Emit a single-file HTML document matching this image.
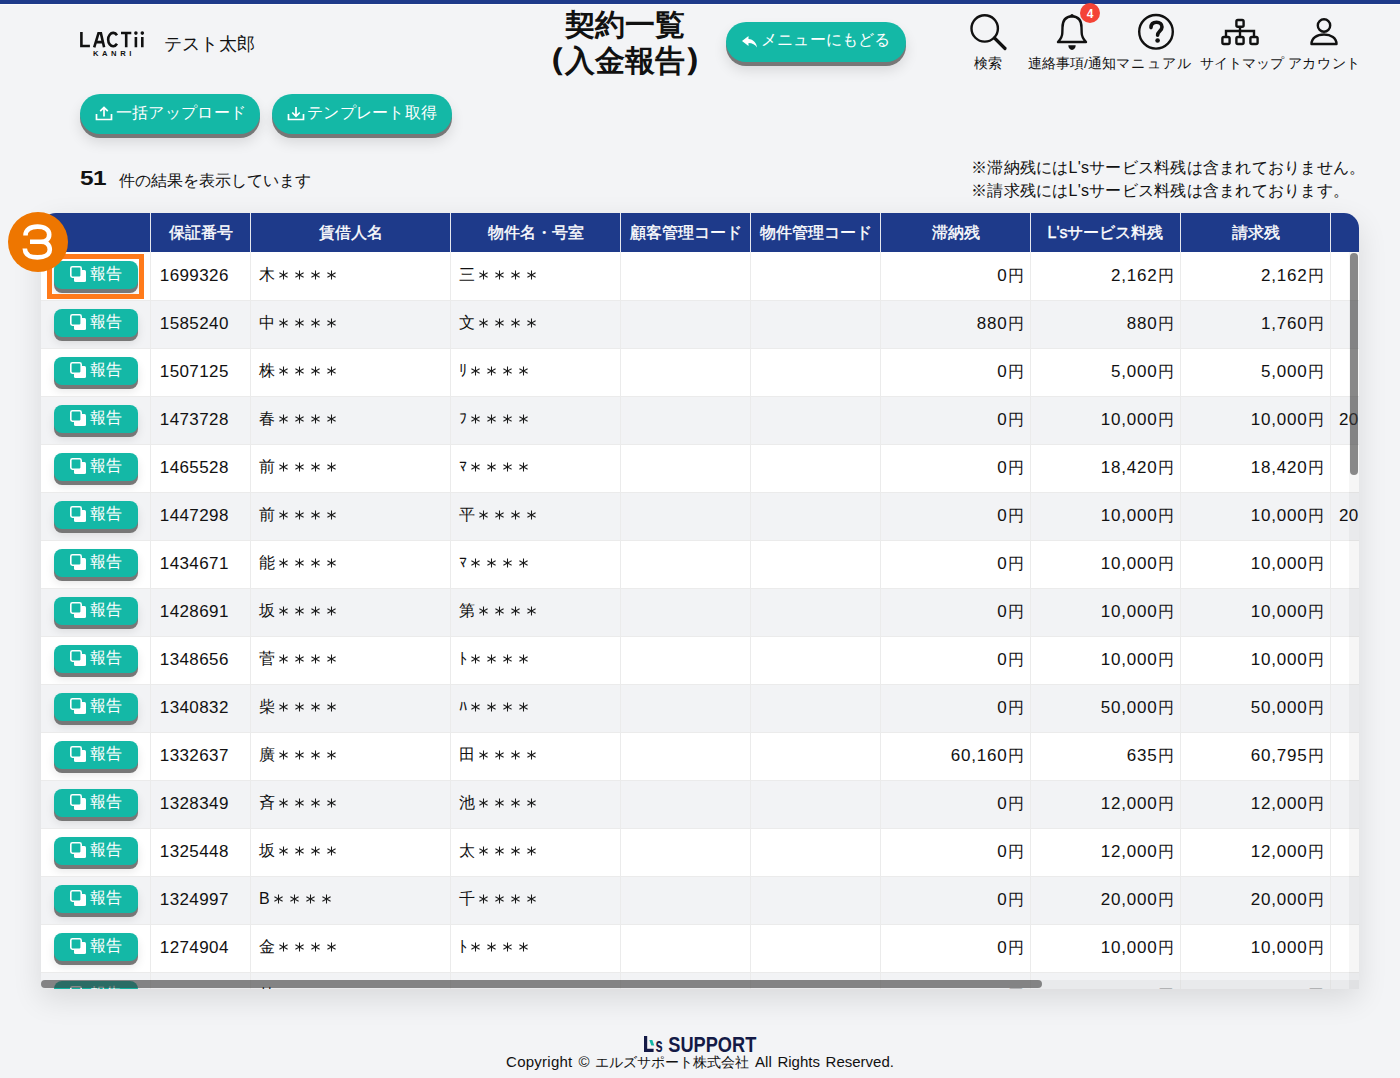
<!DOCTYPE html>
<html lang="ja"><head><meta charset="utf-8">
<style>
*{box-sizing:border-box;margin:0;padding:0}
html,body{width:1400px;height:1078px;overflow:hidden;background:#f3f4f6;font-family:"Liberation Sans",sans-serif;color:#111}
.abs{position:absolute}
#topbar{position:absolute;left:0;top:0;width:1400px;height:4px;background:#1e3a8a}
#topline{position:absolute;left:0;top:4px;width:1400px;height:1px;background:#fbfbfc}
.logo{position:absolute;left:78px;top:28px;width:70px;height:32px}
.uname{position:absolute;left:163.5px;top:32px;font-size:18px;line-height:24px;color:#111;letter-spacing:0.4px}
.title{position:absolute;left:500px;width:249px;top:7px;text-align:center;font-size:30px;line-height:36px;font-weight:bold;color:#111}
.par{-webkit-text-stroke:1.3px #111;position:relative;top:-2px}
.pill{position:absolute;height:40px;border-radius:20px;background:#14b8a6;color:#fff;box-shadow:0 4px 0 #777,0 8px 14px rgba(0,0,0,0.12);font-size:16px;line-height:40px;white-space:nowrap}
.nav{position:absolute;top:0;width:84px;height:80px;text-align:center}
.nav svg{position:absolute;left:0;top:0}
.nav span{position:absolute;left:-12px;width:108px;top:53.5px;font-size:13.6px;line-height:20px;text-align:center;color:#111;white-space:nowrap}
.badge{position:absolute;left:1080px;top:3px;width:20px;height:20px;border-radius:10px;background:#f44336;color:#fff;font-size:12px;font-weight:bold;line-height:22px;text-align:center}
.count{position:absolute;left:80px;top:166px;font-size:20px;font-weight:bold;line-height:24px;letter-spacing:-0.5px;transform:scaleX(1.22);transform-origin:0 0}
.countt{position:absolute;left:119px;top:171px;font-size:16px;line-height:20px}
.note{position:absolute;left:971px;top:156px;font-size:16px;line-height:23px;white-space:nowrap;letter-spacing:0.25px}
#tbl{position:absolute;left:41px;top:213px;width:1318px;height:776px;border-radius:15px 15px 0 0;overflow:hidden;background:#fff;box-shadow:0 10px 30px rgba(0,0,0,0.11)}
.hc{position:absolute;top:0;height:39px;background:#1e3a8a;color:#fff;font-weight:normal;-webkit-text-stroke:0.4px #fff;font-size:16px;line-height:39px;text-align:center;white-space:nowrap;overflow:hidden;padding-left:1px}
.hv{position:absolute;top:0;width:1px;height:39px;background:#e6e8ef}
.row{position:absolute;left:0;width:1318px;height:48px}
.hl{position:absolute;left:0;top:0;width:1318px;height:1px;background:#ebebeb}
.bv{position:absolute;top:39px;width:1px;height:737px;background:#ebebeb}
.c{position:absolute;top:13px;font-size:16px;line-height:20px;white-space:nowrap}
.num{font-size:17px;letter-spacing:0.4px;position:absolute;top:14px}
.amt{top:14px}
.amt b{font-weight:normal;font-size:17px;letter-spacing:0.8px}
.ast{vertical-align:-1px}
.btn{position:absolute;left:13px;top:9px;width:84px;height:28px;border-radius:8px;background:#14b8a6;box-shadow:0 4px 0 #777,0 6px 10px rgba(0,0,0,0.10);color:#fff;font-size:16px;line-height:28px}
.btn .cp{position:absolute;left:16px;top:5px}
.btn span{position:absolute;left:36px;top:-1px}
.vs{position:absolute;left:1308px;top:39px;width:10px;height:737px;background:rgba(0,0,0,0.035)}
.vthumb{position:absolute;left:1309px;top:40px;width:8px;height:222px;border-radius:4px;background:rgba(60,60,60,0.59)}
.hs{position:absolute;left:0;top:767px;width:1318px;height:9px;background:rgba(0,0,0,0.035)}
.hthumb{position:absolute;left:0;top:767px;width:1001px;height:8px;border-radius:4px;background:rgba(60,60,60,0.59)}
.mark{position:absolute;left:47px;top:254px;width:97px;height:45px;border:5px solid #ff7a1a}
.circ{position:absolute;left:8px;top:212px;width:60px;height:60px}
.flogo{position:absolute;left:640px;top:1030px;width:120px;height:26px}
.copy{position:absolute;left:0;width:1400px;top:1052px;text-align:center;font-size:15px;line-height:20px;color:#111;word-spacing:1.5px}
</style></head><body>
<svg width="0" height="0" style="position:absolute"><defs>
<g id="a1" stroke="#1a1a1a" stroke-width="1.05" fill="none"><path d="M0.5 -4.5V4.5M-3.6 -2.2L4.6 2.2M-3.6 2.2L4.6 -2.2"/></g>
<g id="a4"><use href="#a1" x="8" y="6"/><use href="#a1" x="24" y="6"/><use href="#a1" x="40" y="6"/><use href="#a1" x="56" y="6"/></g>
</defs></svg>
<div id="topbar"></div><div id="topline"></div>

<svg class="logo" viewBox="78 28 70 32">
 <g fill="none" stroke="#111" stroke-width="2.6">
  <path d="M81.4 31.9 V46 H89.9"/>
  <path d="M94.2 47.3 L98.5 33.2 H100.9 L104.1 47.3 M95.6 42.1 H102.6"/>
  <path d="M117 35.3 A5 6.65 0 1 0 117 43.8"/>
  <path d="M121 33.05 H131.3 M126.2 33 V47.3"/>
  <path d="M135.9 37 V47.3 M142.3 37 V47.3"/>
 </g>
 <circle cx="135.9" cy="33.1" r="1.8" fill="#111"/><circle cx="142.3" cy="33.1" r="1.8" fill="#111"/>
 <text x="93" y="56" font-family="Liberation Sans" font-size="7.6" font-weight="bold" fill="#111" textLength="38.3" lengthAdjust="spacing">KANRI</text>
</svg>
<div class="uname">テスト太郎</div>

<div class="title">契約一覧<br><span class="par">（</span>入金報告<span class="par">）</span></div>

<div class="pill" style="left:726px;top:22px;width:180px">
 <svg class="abs" style="left:16px;top:14px" width="16" height="12" viewBox="0 0 16 12"><path d="M6.5 0 L0 5 L6.5 10 L6.5 7 C10.5 7 13 8.5 15 11.5 C14.5 7 11.5 3.3 6.5 3 Z" fill="#fff"/></svg>
 <span class="abs" style="left:35px;top:-2px;letter-spacing:0.2px">メニューにもどる</span>
</div>

<div class="nav" style="left:946px">
 <svg width="84" height="54" viewBox="0 0 84 54"><circle cx="38.7" cy="28.4" r="13.2" fill="none" stroke="#111" stroke-width="2.4"/><line x1="48.5" y1="38" x2="59" y2="48.5" stroke="#111" stroke-width="3.2" stroke-linecap="round"/></svg>
 <span>検索</span>
</div>
<div class="nav" style="left:1030px">
 <svg width="84" height="54" viewBox="0 0 84 54"><path d="M42 16.3 C35.5 16.6 32.5 21 32.5 27.5 L32.3 33 C32.3 37 30.3 39.5 28 42 L56 42 C53.7 39.5 51.7 37 51.7 33 L51.5 27.5 C51.5 21 48.5 16.6 42 16.3 Z" fill="none" stroke="#111" stroke-width="2.4" stroke-linejoin="round"/><path d="M38.3 45.3 L45.7 45.3 C45.7 48 44 50 42 50 C40 50 38.3 48 38.3 45.3 Z" fill="#111"/><circle cx="42" cy="15.6" r="1.7" fill="#111"/></svg>
 <span>連絡事項/通知</span>
</div>
<div class="badge">4</div>
<div class="nav" style="left:1114px">
 <svg width="84" height="54" viewBox="0 0 84 54"><circle cx="42" cy="31.8" r="16.8" fill="none" stroke="#111" stroke-width="2.4"/><path d="M37 27.6 C37 24 39.3 22.2 42.6 22.2 C45.9 22.2 48 24.2 48 27 C48 30.8 43.6 31.2 43.6 35.3" fill="none" stroke="#111" stroke-width="3.6" stroke-linecap="round"/><circle cx="43.6" cy="40.5" r="2.3" fill="#111"/></svg>
 <span style="letter-spacing:1.4px;text-indent:-3.6px">マニュアル</span>
</div>
<div class="nav" style="left:1198px">
 <svg width="84" height="54" viewBox="0 0 84 54" fill="none" stroke="#111" stroke-width="2.4"><rect x="38.4" y="20" width="7.2" height="6.8" rx="1.5"/><line x1="42" y1="26.8" x2="42" y2="36"/><path d="M28 36.5 L28 31 L56 31 L56 36.5"/><rect x="24.4" y="37" width="7.2" height="7" rx="1.5"/><rect x="38.4" y="37" width="7.2" height="7" rx="1.5"/><rect x="52.4" y="37" width="7.2" height="7" rx="1.5"/></svg>
 <span style="text-indent:3px">サイトマップ</span>
</div>
<div class="nav" style="left:1282px">
 <svg width="84" height="54" viewBox="0 0 84 54" fill="none" stroke="#111" stroke-width="2.4"><circle cx="42" cy="25.5" r="6.2"/><path d="M29.5 44 C29.5 38 35 34.5 42 34.5 C49 34.5 54.5 38 54.5 44 Z" stroke-linejoin="round"/></svg>
 <span style="letter-spacing:0.7px;text-indent:0.7px">アカウント</span>
</div>

<div class="pill" style="left:80px;top:94px;width:180px">
 <svg class="abs" style="left:15px;top:12px" width="18" height="15" viewBox="0 0 18 15" fill="none" stroke="#fff" stroke-width="1.7"><path d="M1.5 8 L1.5 13.5 L16.5 13.5 L16.5 8"/><path d="M9 10.5 L9 1.8 M5.2 5.2 L9 1.4 L12.8 5.2"/></svg>
 <span class="abs" style="left:35.5px;top:-1px;letter-spacing:0.35px">一括アップロード</span>
</div>
<div class="pill" style="left:272px;top:94px;width:180px">
 <svg class="abs" style="left:15px;top:12px" width="18" height="15" viewBox="0 0 18 15" fill="none" stroke="#fff" stroke-width="1.7"><path d="M1.5 8 L1.5 13.5 L16.5 13.5 L16.5 8"/><path d="M9 1 L9 10 M5.2 6.5 L9 10.3 L12.8 6.5"/></svg>
 <span class="abs" style="left:35px;top:-1px;letter-spacing:0.25px">テンプレート取得</span>
</div>

<div class="count">51</div>
<div class="countt">件の結果を表示しています</div>
<div class="note">※滞納残にはL'sサービス料残は含まれておりません。<br>※請求残にはL'sサービス料残は含まれております。</div>

<div id="tbl">
<div class="hc" style="left:0px;width:109px"></div>
<div class="hc" style="left:109px;width:100px">保証番号</div>
<div class="hc" style="left:209px;width:200px">賃借人名</div>
<div class="hc" style="left:409px;width:170px">物件名・号室</div>
<div class="hc" style="left:579px;width:130px">顧客管理コード</div>
<div class="hc" style="left:709px;width:130px">物件管理コード</div>
<div class="hc" style="left:839px;width:150px">滞納残</div>
<div class="hc" style="left:989px;width:150px">L'sサービス料残</div>
<div class="hc" style="left:1139px;width:150px">請求残</div>
<div class="hc" style="left:1289px;width:150px"></div>
<div class="hv" style="left:109px"></div>
<div class="hv" style="left:209px"></div>
<div class="hv" style="left:409px"></div>
<div class="hv" style="left:579px"></div>
<div class="hv" style="left:709px"></div>
<div class="hv" style="left:839px"></div>
<div class="hv" style="left:989px"></div>
<div class="hv" style="left:1139px"></div>
<div class="hv" style="left:1289px"></div>
<div class="row" style="top:39px;background:#fff">
<div class="btn"><svg class="cp" width="17" height="17" viewBox="0 0 17 17"><rect x="4" y="4" width="12" height="12" rx="1.5" fill="#fff"/><rect x="0.8" y="0.8" width="10.4" height="10.4" rx="1.6" fill="#14b8a6" stroke="#fff" stroke-width="1.6"/></svg><span>報告</span></div>
<div class="c num" style="left:118.8px">1699326</div>
<div class="c nm" style="left:218px">木<svg class="ast" width="64" height="12"><use href="#a4"/></svg></div>
<div class="c nm" style="left:418px">三<svg class="ast" width="64" height="12"><use href="#a4"/></svg></div>
<div class="c amt" style="right:335.5px"><b>0</b>円</div>
<div class="c amt" style="right:185.5px"><b>2,162</b>円</div>
<div class="c amt" style="right:35.5px"><b>2,162</b>円</div>
</div>
<div class="row" style="top:87px;background:#f2f3f5">
<div class="hl"></div>
<div class="btn"><svg class="cp" width="17" height="17" viewBox="0 0 17 17"><rect x="4" y="4" width="12" height="12" rx="1.5" fill="#fff"/><rect x="0.8" y="0.8" width="10.4" height="10.4" rx="1.6" fill="#14b8a6" stroke="#fff" stroke-width="1.6"/></svg><span>報告</span></div>
<div class="c num" style="left:118.8px">1585240</div>
<div class="c nm" style="left:218px">中<svg class="ast" width="64" height="12"><use href="#a4"/></svg></div>
<div class="c nm" style="left:418px">文<svg class="ast" width="64" height="12"><use href="#a4"/></svg></div>
<div class="c amt" style="right:335.5px"><b>880</b>円</div>
<div class="c amt" style="right:185.5px"><b>880</b>円</div>
<div class="c amt" style="right:35.5px"><b>1,760</b>円</div>
</div>
<div class="row" style="top:135px;background:#fff">
<div class="hl"></div>
<div class="btn"><svg class="cp" width="17" height="17" viewBox="0 0 17 17"><rect x="4" y="4" width="12" height="12" rx="1.5" fill="#fff"/><rect x="0.8" y="0.8" width="10.4" height="10.4" rx="1.6" fill="#14b8a6" stroke="#fff" stroke-width="1.6"/></svg><span>報告</span></div>
<div class="c num" style="left:118.8px">1507125</div>
<div class="c nm" style="left:218px">株<svg class="ast" width="64" height="12"><use href="#a4"/></svg></div>
<div class="c nm" style="left:418px">ﾘ<svg class="ast" width="64" height="12"><use href="#a4"/></svg></div>
<div class="c amt" style="right:335.5px"><b>0</b>円</div>
<div class="c amt" style="right:185.5px"><b>5,000</b>円</div>
<div class="c amt" style="right:35.5px"><b>5,000</b>円</div>
</div>
<div class="row" style="top:183px;background:#f2f3f5">
<div class="hl"></div>
<div class="btn"><svg class="cp" width="17" height="17" viewBox="0 0 17 17"><rect x="4" y="4" width="12" height="12" rx="1.5" fill="#fff"/><rect x="0.8" y="0.8" width="10.4" height="10.4" rx="1.6" fill="#14b8a6" stroke="#fff" stroke-width="1.6"/></svg><span>報告</span></div>
<div class="c num" style="left:118.8px">1473728</div>
<div class="c nm" style="left:218px">春<svg class="ast" width="64" height="12"><use href="#a4"/></svg></div>
<div class="c nm" style="left:418px">ﾌ<svg class="ast" width="64" height="12"><use href="#a4"/></svg></div>
<div class="c amt" style="right:335.5px"><b>0</b>円</div>
<div class="c amt" style="right:185.5px"><b>10,000</b>円</div>
<div class="c amt" style="right:35.5px"><b>10,000</b>円</div>
<div class="c num" style="left:1298px">20</div>
</div>
<div class="row" style="top:231px;background:#fff">
<div class="hl"></div>
<div class="btn"><svg class="cp" width="17" height="17" viewBox="0 0 17 17"><rect x="4" y="4" width="12" height="12" rx="1.5" fill="#fff"/><rect x="0.8" y="0.8" width="10.4" height="10.4" rx="1.6" fill="#14b8a6" stroke="#fff" stroke-width="1.6"/></svg><span>報告</span></div>
<div class="c num" style="left:118.8px">1465528</div>
<div class="c nm" style="left:218px">前<svg class="ast" width="64" height="12"><use href="#a4"/></svg></div>
<div class="c nm" style="left:418px">ﾏ<svg class="ast" width="64" height="12"><use href="#a4"/></svg></div>
<div class="c amt" style="right:335.5px"><b>0</b>円</div>
<div class="c amt" style="right:185.5px"><b>18,420</b>円</div>
<div class="c amt" style="right:35.5px"><b>18,420</b>円</div>
</div>
<div class="row" style="top:279px;background:#f2f3f5">
<div class="hl"></div>
<div class="btn"><svg class="cp" width="17" height="17" viewBox="0 0 17 17"><rect x="4" y="4" width="12" height="12" rx="1.5" fill="#fff"/><rect x="0.8" y="0.8" width="10.4" height="10.4" rx="1.6" fill="#14b8a6" stroke="#fff" stroke-width="1.6"/></svg><span>報告</span></div>
<div class="c num" style="left:118.8px">1447298</div>
<div class="c nm" style="left:218px">前<svg class="ast" width="64" height="12"><use href="#a4"/></svg></div>
<div class="c nm" style="left:418px">平<svg class="ast" width="64" height="12"><use href="#a4"/></svg></div>
<div class="c amt" style="right:335.5px"><b>0</b>円</div>
<div class="c amt" style="right:185.5px"><b>10,000</b>円</div>
<div class="c amt" style="right:35.5px"><b>10,000</b>円</div>
<div class="c num" style="left:1298px">20</div>
</div>
<div class="row" style="top:327px;background:#fff">
<div class="hl"></div>
<div class="btn"><svg class="cp" width="17" height="17" viewBox="0 0 17 17"><rect x="4" y="4" width="12" height="12" rx="1.5" fill="#fff"/><rect x="0.8" y="0.8" width="10.4" height="10.4" rx="1.6" fill="#14b8a6" stroke="#fff" stroke-width="1.6"/></svg><span>報告</span></div>
<div class="c num" style="left:118.8px">1434671</div>
<div class="c nm" style="left:218px">能<svg class="ast" width="64" height="12"><use href="#a4"/></svg></div>
<div class="c nm" style="left:418px">ﾏ<svg class="ast" width="64" height="12"><use href="#a4"/></svg></div>
<div class="c amt" style="right:335.5px"><b>0</b>円</div>
<div class="c amt" style="right:185.5px"><b>10,000</b>円</div>
<div class="c amt" style="right:35.5px"><b>10,000</b>円</div>
</div>
<div class="row" style="top:375px;background:#f2f3f5">
<div class="hl"></div>
<div class="btn"><svg class="cp" width="17" height="17" viewBox="0 0 17 17"><rect x="4" y="4" width="12" height="12" rx="1.5" fill="#fff"/><rect x="0.8" y="0.8" width="10.4" height="10.4" rx="1.6" fill="#14b8a6" stroke="#fff" stroke-width="1.6"/></svg><span>報告</span></div>
<div class="c num" style="left:118.8px">1428691</div>
<div class="c nm" style="left:218px">坂<svg class="ast" width="64" height="12"><use href="#a4"/></svg></div>
<div class="c nm" style="left:418px">第<svg class="ast" width="64" height="12"><use href="#a4"/></svg></div>
<div class="c amt" style="right:335.5px"><b>0</b>円</div>
<div class="c amt" style="right:185.5px"><b>10,000</b>円</div>
<div class="c amt" style="right:35.5px"><b>10,000</b>円</div>
</div>
<div class="row" style="top:423px;background:#fff">
<div class="hl"></div>
<div class="btn"><svg class="cp" width="17" height="17" viewBox="0 0 17 17"><rect x="4" y="4" width="12" height="12" rx="1.5" fill="#fff"/><rect x="0.8" y="0.8" width="10.4" height="10.4" rx="1.6" fill="#14b8a6" stroke="#fff" stroke-width="1.6"/></svg><span>報告</span></div>
<div class="c num" style="left:118.8px">1348656</div>
<div class="c nm" style="left:218px">菅<svg class="ast" width="64" height="12"><use href="#a4"/></svg></div>
<div class="c nm" style="left:418px">ﾄ<svg class="ast" width="64" height="12"><use href="#a4"/></svg></div>
<div class="c amt" style="right:335.5px"><b>0</b>円</div>
<div class="c amt" style="right:185.5px"><b>10,000</b>円</div>
<div class="c amt" style="right:35.5px"><b>10,000</b>円</div>
</div>
<div class="row" style="top:471px;background:#f2f3f5">
<div class="hl"></div>
<div class="btn"><svg class="cp" width="17" height="17" viewBox="0 0 17 17"><rect x="4" y="4" width="12" height="12" rx="1.5" fill="#fff"/><rect x="0.8" y="0.8" width="10.4" height="10.4" rx="1.6" fill="#14b8a6" stroke="#fff" stroke-width="1.6"/></svg><span>報告</span></div>
<div class="c num" style="left:118.8px">1340832</div>
<div class="c nm" style="left:218px">柴<svg class="ast" width="64" height="12"><use href="#a4"/></svg></div>
<div class="c nm" style="left:418px">ﾊ<svg class="ast" width="64" height="12"><use href="#a4"/></svg></div>
<div class="c amt" style="right:335.5px"><b>0</b>円</div>
<div class="c amt" style="right:185.5px"><b>50,000</b>円</div>
<div class="c amt" style="right:35.5px"><b>50,000</b>円</div>
</div>
<div class="row" style="top:519px;background:#fff">
<div class="hl"></div>
<div class="btn"><svg class="cp" width="17" height="17" viewBox="0 0 17 17"><rect x="4" y="4" width="12" height="12" rx="1.5" fill="#fff"/><rect x="0.8" y="0.8" width="10.4" height="10.4" rx="1.6" fill="#14b8a6" stroke="#fff" stroke-width="1.6"/></svg><span>報告</span></div>
<div class="c num" style="left:118.8px">1332637</div>
<div class="c nm" style="left:218px">廣<svg class="ast" width="64" height="12"><use href="#a4"/></svg></div>
<div class="c nm" style="left:418px">田<svg class="ast" width="64" height="12"><use href="#a4"/></svg></div>
<div class="c amt" style="right:335.5px"><b>60,160</b>円</div>
<div class="c amt" style="right:185.5px"><b>635</b>円</div>
<div class="c amt" style="right:35.5px"><b>60,795</b>円</div>
</div>
<div class="row" style="top:567px;background:#f2f3f5">
<div class="hl"></div>
<div class="btn"><svg class="cp" width="17" height="17" viewBox="0 0 17 17"><rect x="4" y="4" width="12" height="12" rx="1.5" fill="#fff"/><rect x="0.8" y="0.8" width="10.4" height="10.4" rx="1.6" fill="#14b8a6" stroke="#fff" stroke-width="1.6"/></svg><span>報告</span></div>
<div class="c num" style="left:118.8px">1328349</div>
<div class="c nm" style="left:218px">斉<svg class="ast" width="64" height="12"><use href="#a4"/></svg></div>
<div class="c nm" style="left:418px">池<svg class="ast" width="64" height="12"><use href="#a4"/></svg></div>
<div class="c amt" style="right:335.5px"><b>0</b>円</div>
<div class="c amt" style="right:185.5px"><b>12,000</b>円</div>
<div class="c amt" style="right:35.5px"><b>12,000</b>円</div>
</div>
<div class="row" style="top:615px;background:#fff">
<div class="hl"></div>
<div class="btn"><svg class="cp" width="17" height="17" viewBox="0 0 17 17"><rect x="4" y="4" width="12" height="12" rx="1.5" fill="#fff"/><rect x="0.8" y="0.8" width="10.4" height="10.4" rx="1.6" fill="#14b8a6" stroke="#fff" stroke-width="1.6"/></svg><span>報告</span></div>
<div class="c num" style="left:118.8px">1325448</div>
<div class="c nm" style="left:218px">坂<svg class="ast" width="64" height="12"><use href="#a4"/></svg></div>
<div class="c nm" style="left:418px">太<svg class="ast" width="64" height="12"><use href="#a4"/></svg></div>
<div class="c amt" style="right:335.5px"><b>0</b>円</div>
<div class="c amt" style="right:185.5px"><b>12,000</b>円</div>
<div class="c amt" style="right:35.5px"><b>12,000</b>円</div>
</div>
<div class="row" style="top:663px;background:#f2f3f5">
<div class="hl"></div>
<div class="btn"><svg class="cp" width="17" height="17" viewBox="0 0 17 17"><rect x="4" y="4" width="12" height="12" rx="1.5" fill="#fff"/><rect x="0.8" y="0.8" width="10.4" height="10.4" rx="1.6" fill="#14b8a6" stroke="#fff" stroke-width="1.6"/></svg><span>報告</span></div>
<div class="c num" style="left:118.8px">1324997</div>
<div class="c nm" style="left:218px">B<svg class="ast" width="64" height="12"><use href="#a4"/></svg></div>
<div class="c nm" style="left:418px">千<svg class="ast" width="64" height="12"><use href="#a4"/></svg></div>
<div class="c amt" style="right:335.5px"><b>0</b>円</div>
<div class="c amt" style="right:185.5px"><b>20,000</b>円</div>
<div class="c amt" style="right:35.5px"><b>20,000</b>円</div>
</div>
<div class="row" style="top:711px;background:#fff">
<div class="hl"></div>
<div class="btn"><svg class="cp" width="17" height="17" viewBox="0 0 17 17"><rect x="4" y="4" width="12" height="12" rx="1.5" fill="#fff"/><rect x="0.8" y="0.8" width="10.4" height="10.4" rx="1.6" fill="#14b8a6" stroke="#fff" stroke-width="1.6"/></svg><span>報告</span></div>
<div class="c num" style="left:118.8px">1274904</div>
<div class="c nm" style="left:218px">金<svg class="ast" width="64" height="12"><use href="#a4"/></svg></div>
<div class="c nm" style="left:418px">ﾄ<svg class="ast" width="64" height="12"><use href="#a4"/></svg></div>
<div class="c amt" style="right:335.5px"><b>0</b>円</div>
<div class="c amt" style="right:185.5px"><b>10,000</b>円</div>
<div class="c amt" style="right:35.5px"><b>10,000</b>円</div>
</div>
<div class="row" style="top:759px;background:#f2f3f5">
<div class="hl"></div>
<div class="btn"><svg class="cp" width="17" height="17" viewBox="0 0 17 17"><rect x="4" y="4" width="12" height="12" rx="1.5" fill="#fff"/><rect x="0.8" y="0.8" width="10.4" height="10.4" rx="1.6" fill="#14b8a6" stroke="#fff" stroke-width="1.6"/></svg><span>報告</span></div>
<div class="c num" style="left:118.8px">1263711</div>
<div class="c nm" style="left:218px">林<svg class="ast" width="64" height="12"><use href="#a4"/></svg></div>
<div class="c nm" style="left:418px">ｴ<svg class="ast" width="64" height="12"><use href="#a4"/></svg></div>
<div class="c amt" style="right:335.5px"><b>0</b>円</div>
<div class="c amt" style="right:185.5px"><b>10,000</b>円</div>
<div class="c amt" style="right:35.5px"><b>10,000</b>円</div>
</div>
<div class="bv" style="left:109px"></div>
<div class="bv" style="left:209px"></div>
<div class="bv" style="left:409px"></div>
<div class="bv" style="left:579px"></div>
<div class="bv" style="left:709px"></div>
<div class="bv" style="left:839px"></div>
<div class="bv" style="left:989px"></div>
<div class="bv" style="left:1139px"></div>
<div class="bv" style="left:1289px"></div>
<div class="vs"></div><div class="vthumb"></div>
<div class="hs"></div><div class="hthumb"></div>
</div>

<div class="mark"></div>
<svg class="circ" viewBox="0 0 60 60"><circle cx="30" cy="30" r="30" fill="#ee7600"/><path d="M17.5 23.5 C17.5 17.8 22 14.6 29.5 14.6 C37 14.6 41.2 18 41.2 22.5 C41.2 27 38 29.8 33 29.8 L22 29.8 M33 29.8 C38.5 29.8 41.8 33 41.8 37.8 C41.8 42.6 37 45.4 29.5 45.4 C21.5 45.4 17 42.2 16.8 36.5" fill="none" stroke="#fff" stroke-width="4.6"/></svg>

<svg class="flogo" viewBox="640 1030 120 26">
 <path d="M645.6 1036 V1050.4 H653.6" stroke="#141a46" stroke-width="3.2" fill="none"/>
 <path d="M649.3 1040 L652.3 1040 L654.3 1045.6 L651.3 1045.6 Z" fill="#14b8a6"/>
 <text x="655.6" y="1052" font-family="Liberation Sans" font-size="21" font-weight="bold" fill="#141a46" textLength="7.2" lengthAdjust="spacingAndGlyphs">s</text>
 <text x="668.3" y="1052" font-family="Liberation Sans" font-size="22" font-weight="bold" fill="#141a46" textLength="88" lengthAdjust="spacingAndGlyphs">SUPPORT</text>
</svg>
<div class="copy"><span style="letter-spacing:0.25px">Copyright ©</span> <span style="font-size:14px">エルズサポート株式会社</span> All Rights Reserved.</div>
</body></html>
